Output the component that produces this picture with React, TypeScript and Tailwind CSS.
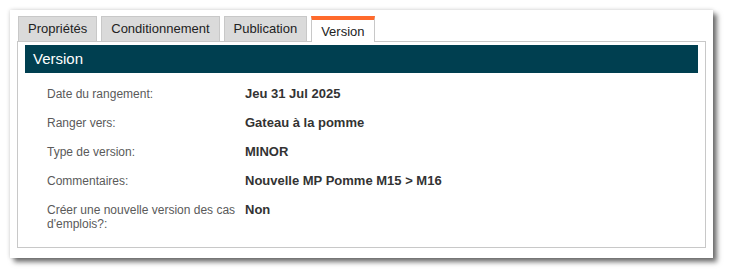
import { useState } from 'react'

const tabs = ['Propriétés', 'Conditionnement', 'Publication', 'Version']

const rows: { label: string; value: string }[] = [
  { label: 'Date du rangement:', value: 'Jeu 31 Jul 2025' },
  { label: 'Ranger vers:', value: 'Gateau à la pomme' },
  { label: 'Type de version:', value: 'MINOR' },
  { label: 'Commentaires:', value: 'Nouvelle MP Pomme M15 > M16' },
  { label: "Créer une nouvelle version des cas d'emplois?:", value: 'Non' },
]

function Tab({ name, active, onClick }: { name: string; active: boolean; onClick: () => void }) {
  return (
    <button
      onClick={onClick}
      className={
        active
          ? 'relative z-10 -mb-px h-[26px] border-x border-t-4 border-x-[#c8c8c8] border-t-[#ff6a2c] bg-white px-[9px] pt-[2px] text-[13px] leading-[18px] text-[#222]'
          : 'h-[25px] border border-b-0 border-[#c8c8c8] bg-[#dadada] px-[9px] pb-[1px] text-[13px] leading-[18px] text-[#222]'
      }
    >
      {name}
    </button>
  )
}

export default function App() {
  const [active, setActive] = useState('Version')

  return (
    <div className="min-h-screen bg-white pl-[10px] pt-[10px]" style={{ fontFamily: '"Liberation Sans", Arial, sans-serif' }}>
      <div className="w-[703px] bg-white px-[7px] pb-[10px] pt-[6px] shadow-[0_0_4px_rgba(0,0,0,0.18),4px_4px_5px_rgba(0,0,0,0.55)]">
        <div className="flex items-end gap-[4px] pl-[1px]">
          {tabs.map((t) => (
            <Tab key={t} name={t} active={t === active} onClick={() => setActive(t)} />
          ))}
        </div>
        <div className="border border-[#c8c8c8] px-[7px] pb-[9px] pt-[3px]">
          <div className="h-[28px] bg-[#003f50] pl-[8px] text-[15px] leading-[28px] text-white">Version</div>
          <div className="mt-[6px] pl-[22px]">
            {rows.map((r) => (
              <div key={r.label} className="flex py-[7px]">
                <div className="w-[198px] pr-[4px] pt-[1px] text-[12px] leading-[14px] text-[#5a5a5a]">{r.label}</div>
                <div className="text-[13px] font-bold leading-[15px] text-[#333]">{r.value}</div>
              </div>
            ))}
          </div>
        </div>
      </div>
    </div>
  )
}
